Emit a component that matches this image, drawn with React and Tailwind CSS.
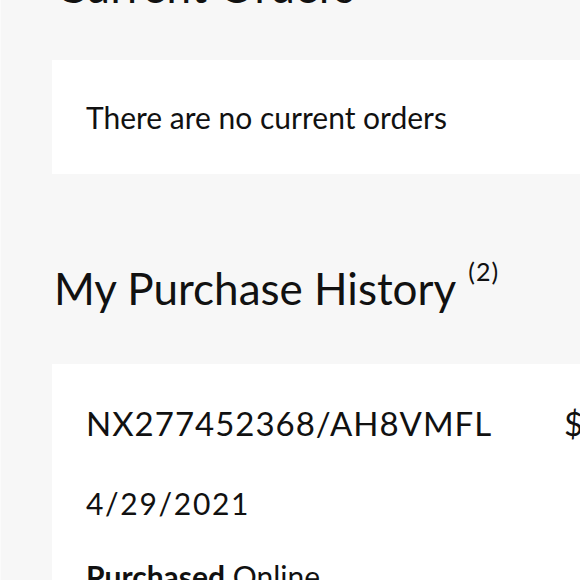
import React from "react";

const font = { fontFamily: '"Lato", "Liberation Sans", sans-serif' };

export default function App() {
  return (
    <div
      className="w-[580px] h-[580px] overflow-hidden bg-[#f7f7f7] border-l border-[#fbfbfb] text-[#111]"
      style={font}
    >
      <div className="w-[800px] pl-[51px] mt-[-40px]">
        {/* Current orders */}
        <h2 className="text-[44px] leading-[52px] pl-[4px] tracking-[0.5px]">Current Orders</h2>
        <div className="mt-[48px] bg-white h-[114px] flex items-center pl-[34px]">
          <p className="text-[30px] leading-[36px]">There are no current orders</p>
        </div>

        {/* Purchase history */}
        <h2 className="mt-[88px] text-[44px] leading-[52px] pl-[2px] flex items-start">
          My Purchase History
          <sup className="text-[25px] leading-none ml-[12px] mt-[9px] tracking-[1px]">(2)</sup>
        </h2>
        <div className="mt-[50px] bg-white pl-[34px] pt-[39px] pb-[40px]">
          <div className="flex items-center">
            <span className="w-[478px] text-[33px] leading-[40px] tracking-[1px]">NX277452368/AH8VMFL</span>
            <span className="text-[33px] leading-[40px]">$94.00</span>
          </div>
          <p className="mt-[42px] text-[30px] leading-[36px] tracking-[1.7px]">4/29/2021</p>
          <p className="mt-[37px] text-[30px] leading-[36px]">
            <span className="font-bold">Purchased</span> Online
          </p>
        </div>
      </div>
    </div>
  );
}
